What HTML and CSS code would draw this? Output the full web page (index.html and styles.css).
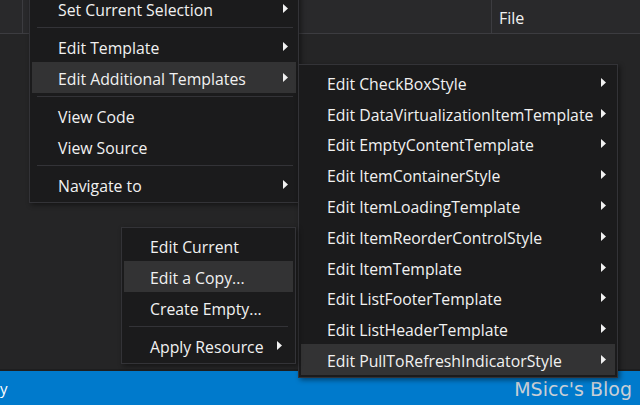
FILE: index.html
```html
<!DOCTYPE html>
<html>
<head>
<meta charset="utf-8">
<link rel="stylesheet" href="styles.css">
</head>
<body>
<div class="app">
  <div class="header">
    <div class="hcol c1"></div>
    <div class="hcol c2"></div>
    <div class="hcol c3">File</div>
  </div>
  <div class="content"></div>
  <div class="status">
    <span class="status-left">y</span>
    <span class="brand">MSicc's Blog</span>
  </div>

  <div class="menu main-menu">
    <div class="item">Set Current Selection<svg class="arrow" width="5" height="9" viewBox="0 0 5 9"><path d="M0 0L5 4.5L0 9Z"/></svg></div>
    <div class="sep"></div>
    <div class="item">Edit Template<svg class="arrow" width="5" height="9" viewBox="0 0 5 9"><path d="M0 0L5 4.5L0 9Z"/></svg></div>
    <div class="item active">Edit Additional Templates<svg class="arrow" width="5" height="9" viewBox="0 0 5 9"><path d="M0 0L5 4.5L0 9Z"/></svg></div>
    <div class="sep"></div>
    <div class="item">View Code</div>
    <div class="item">View Source</div>
    <div class="sep"></div>
    <div class="item">Navigate to<svg class="arrow" width="5" height="9" viewBox="0 0 5 9"><path d="M0 0L5 4.5L0 9Z"/></svg></div>
  </div>

  <div class="menu sub-menu">
    <div class="item">Edit CheckBoxStyle<svg class="arrow" width="5" height="9" viewBox="0 0 5 9"><path d="M0 0L5 4.5L0 9Z"/></svg></div>
    <div class="item">Edit DataVirtualizationItemTemplate<svg class="arrow" width="5" height="9" viewBox="0 0 5 9"><path d="M0 0L5 4.5L0 9Z"/></svg></div>
    <div class="item">Edit EmptyContentTemplate<svg class="arrow" width="5" height="9" viewBox="0 0 5 9"><path d="M0 0L5 4.5L0 9Z"/></svg></div>
    <div class="item">Edit ItemContainerStyle<svg class="arrow" width="5" height="9" viewBox="0 0 5 9"><path d="M0 0L5 4.5L0 9Z"/></svg></div>
    <div class="item">Edit ItemLoadingTemplate<svg class="arrow" width="5" height="9" viewBox="0 0 5 9"><path d="M0 0L5 4.5L0 9Z"/></svg></div>
    <div class="item">Edit ItemReorderControlStyle<svg class="arrow" width="5" height="9" viewBox="0 0 5 9"><path d="M0 0L5 4.5L0 9Z"/></svg></div>
    <div class="item">Edit ItemTemplate<svg class="arrow" width="5" height="9" viewBox="0 0 5 9"><path d="M0 0L5 4.5L0 9Z"/></svg></div>
    <div class="item">Edit ListFooterTemplate<svg class="arrow" width="5" height="9" viewBox="0 0 5 9"><path d="M0 0L5 4.5L0 9Z"/></svg></div>
    <div class="item">Edit ListHeaderTemplate<svg class="arrow" width="5" height="9" viewBox="0 0 5 9"><path d="M0 0L5 4.5L0 9Z"/></svg></div>
    <div class="item active">Edit PullToRefreshIndicatorStyle<svg class="arrow" width="5" height="9" viewBox="0 0 5 9"><path d="M0 0L5 4.5L0 9Z"/></svg></div>
  </div>

  <div class="menu res-menu">
    <div class="item">Edit Current</div>
    <div class="item active">Edit a Copy...</div>
    <div class="item">Create Empty...</div>
    <div class="sep"></div>
    <div class="item">Apply Resource<svg class="arrow" width="5" height="9" viewBox="0 0 5 9"><path d="M0 0L5 4.5L0 9Z"/></svg></div>
  </div>
</div>
</body>
</html>
```

FILE: styles.css
```css
* { box-sizing: border-box; }
html, body { margin: 0; padding: 0; }
body {
  width: 640px;
  height: 405px;
  overflow: hidden;
  background: #252526;
  font-family: "Open Sans", "Noto Sans", sans-serif;
  color: #f1f1f1;
}
.app {
  position: relative;
  width: 640px;
  height: 405px;
  display: flex;
  flex-direction: column;
  overflow: hidden;
}
.header {
  height: 34px;
  display: flex;
  background: #29292b;
  border-bottom: 1px solid #3c3c40;
}
.hcol { height: 100%; }
.c1 { width: 23px; border-right: 1px solid #3c3c40; }
.c2 { width: 469px; border-right: 1px solid #3c3c40; }
.c3 {
  flex: 1;
  padding-left: 7px;
  display: flex;
  align-items: center;
  font-size: 16px;
  padding-top: 2px;
}
.content {
  flex: 1;
  background: #252526;
  border-bottom: 2px solid #1e1e1f;
}
.status {
  height: 34px;
  background: #007acc;
  display: flex;
  align-items: center;
  justify-content: space-between;
}
.status-left {
  font-size: 15px;
  color: #ffffff;
  margin-left: 0;
}
.brand {
  font-family: "DejaVu Sans", sans-serif;
  font-size: 19px;
  color: #c9cfd6;
  margin-right: 8px;
  padding-top: 2px;
}
.menu {
  position: absolute;
  background: #1b1b1c;
  border: 1px solid #333337;
  padding: 2px;
  box-shadow: 2px 2px 5px rgba(0, 0, 0, 0.45);
}
.main-menu { left: 29px; top: -10px; width: 270px; padding-bottom: 2px; }
.sub-menu { left: 298px; top: 64px; width: 320px; }
.res-menu { left: 121px; top: 227px; width: 175px; }
.item {
  height: 31px;
  display: flex;
  align-items: center;
  padding-left: 26px;
  padding-right: 8px;
  padding-top: 3px;
  font-size: 15.8px;
  white-space: nowrap;
}
.item .arrow { margin-top: -3px; }
.sub-menu .item { padding-right: 9px; height: 30.8px; }
.res-menu .item { padding-right: 11px; }
.item.active { background: #333334; }
.arrow { margin-left: auto; fill: #f1f1f1; flex: none; }
.sep {
  height: 1px;
  background: #333337;
  margin: 3px 3px 3px 5px;
}
.res-menu .sep { margin: 3px 5px 3px 5px; }
```
